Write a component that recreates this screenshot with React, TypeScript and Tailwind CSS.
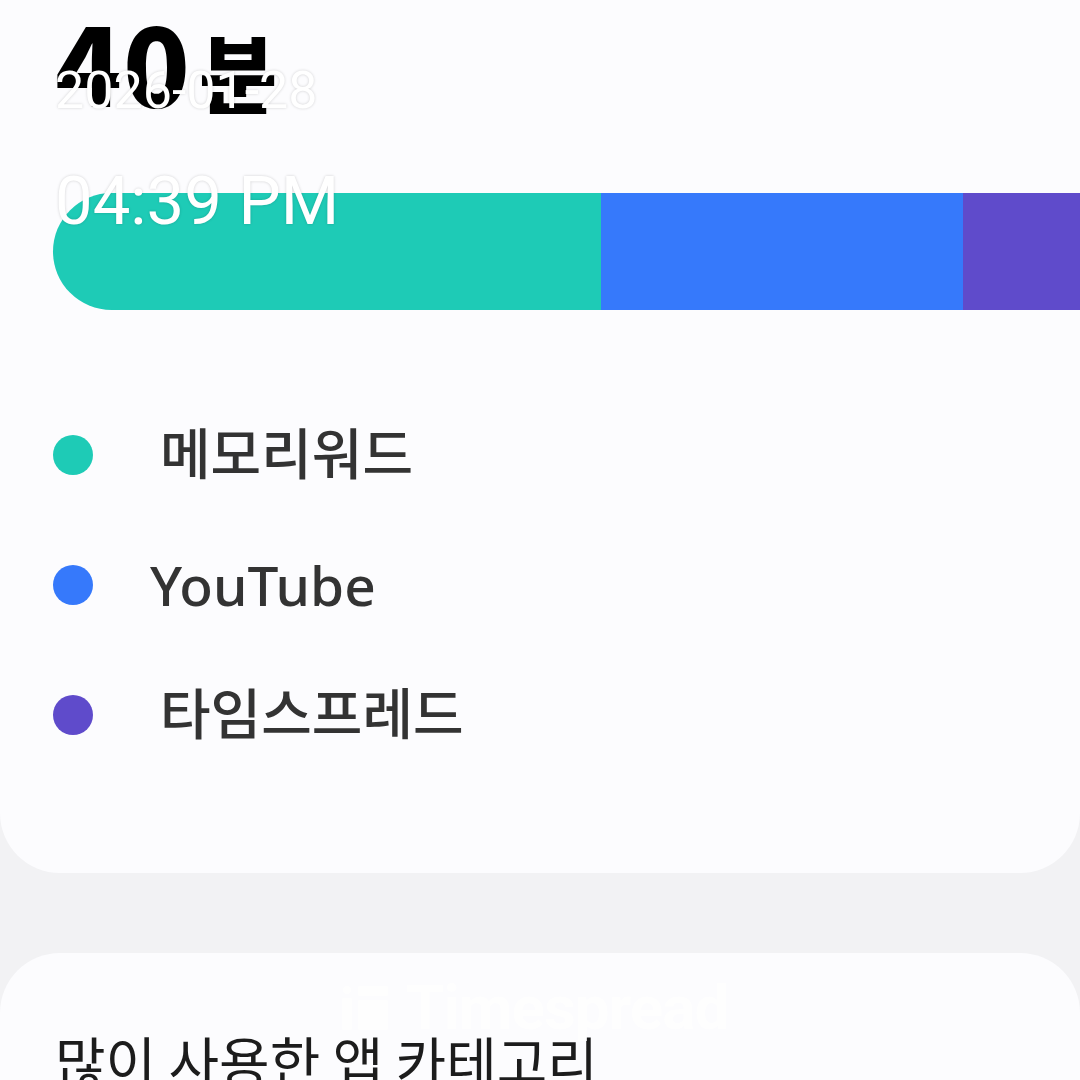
import React from 'react';

type Slice = {
  name: string;
  color: string;
  korean: boolean;
};

const slices: Slice[] = [
  { name: '메모리워드', color: 'bg-[#1ecbb6]', korean: true },
  { name: 'YouTube', color: 'bg-[#3679fb]', korean: false },
  { name: '타임스프레드', color: 'bg-[#5f4bcb]', korean: true },
];

const WatermarkIcon = () => (
  <svg width="46" height="44" viewBox="0 0 46 44" fill="white" aria-hidden="true">
    <circle cx="5" cy="4" r="4" />
    <rect x="0" y="12" width="10" height="32" rx="1" />
    <rect x="16" y="0" width="30" height="10" rx="1" />
    <rect x="16" y="14" width="30" height="30" rx="1" />
  </svg>
);

export default function App() {
  return (
    <div
      className="relative w-[1080px] h-[1080px] overflow-hidden bg-[#f2f2f4]"
      style={{ fontFamily: '"Noto Sans", "Noto Sans CJK KR", sans-serif' }}
    >
      {/* Usage card */}
      <div className="bg-[#fcfcfe] rounded-b-[60px] pt-[4px] pb-[118px]">
        <div className="h-[112px] pl-[55px] flex items-baseline text-black font-black leading-none [font-family:'Noto_Sans_CJK_KR',sans-serif]">
          <span className="text-[110px] tracking-[1px]">40</span>
          <span className="text-[85px] ml-[8px]">분</span>
        </div>

        {/* Stacked bar */}
        <div className="mt-[77px] pl-[53px] flex">
          <div className="shrink-0 w-[548px] h-[117px] rounded-l-full bg-[#1ecbb6]" />
          <div className="shrink-0 w-[362px] h-[117px] bg-[#3679fb]" />
          <div className="shrink-0 w-[200px] h-[117px] bg-[#5f4bcb]" />
        </div>

        {/* Legend */}
        <div className="mt-[105px] pl-[53px] flex flex-col gap-[50px]">
          {slices.map((s) => (
            <div key={s.name} className="h-[80px] flex items-center gap-[57px]">
              <span className={`w-[40px] h-[40px] rounded-full ${s.color}`} />
              <span
                className={
                  s.korean
                    ? 'ml-[10px] pb-[6px] text-[55px] font-medium leading-none text-[#333333]'
                    : 'pb-[2px] text-[55px] font-medium leading-none text-[#333333]'
                }
              >
                {s.name}
              </span>
            </div>
          ))}
        </div>
      </div>

      {/* Category card */}
      <div className="relative mt-[80px] bg-[#fcfcfe] rounded-t-[60px] h-[400px] pt-[79px] pl-[55px]">
        <h2 className="text-[55px] leading-none text-[#1c1c1c] [font-family:'Noto_Sans_CJK_KR',sans-serif]">
          많이 사용한 앱 카테고리
        </h2>

        {/* App watermark */}
        <div className="absolute left-[342px] top-[24px] flex items-center gap-[18px] text-white opacity-90">
          <WatermarkIcon />
          <span className="text-[62px] font-bold leading-none tracking-[-1px] [font-family:Roboto,sans-serif]">
            Timespread
          </span>
        </div>
      </div>

      {/* Capture timestamp overlay */}
      <div className="absolute left-[55px] top-[65px] text-white leading-none [font-family:Roboto,sans-serif] [text-shadow:0_0_3px_rgba(0,0,0,0.18)]">
        <div className="text-[52px]">2026-01-28</div>
        <div className="mt-[51px] text-[67px]">04:39 PM</div>
      </div>
    </div>
  );
}
